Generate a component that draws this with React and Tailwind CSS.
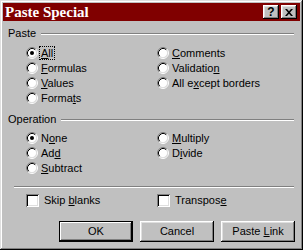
import React from 'react';

const Radio = ({ checked }) => (
  <svg width="12" height="12" viewBox="0 0 12 12" className="shrink-0">
    <circle cx="6" cy="6" r="4.5" fill="#fff" />
    <path d="M2.11 9.89 A5.5 5.5 0 0 1 9.89 2.11" fill="none" stroke="#808080" strokeWidth="1" />
    <path d="M2.82 9.18 A4.5 4.5 0 0 1 9.18 2.82" fill="none" stroke="#000" strokeWidth="1" />
    <path d="M9.89 2.11 A5.5 5.5 0 0 1 2.11 9.89" fill="none" stroke="#fff" strokeWidth="1" />
    <path d="M9.18 2.82 A4.5 4.5 0 0 1 2.82 9.18" fill="none" stroke="#dfdfdf" strokeWidth="1" />
    {checked && <circle cx="6" cy="6" r="2" fill="#000" />}
  </svg>
);

const Label = ({ text, accel, focus }) => {
  const i = accel;
  return (
    <span
      className={
        'px-[1px] leading-[12px] border ' +
        (focus ? 'border-dotted border-black' : 'border-transparent')
      }
    >
      {text.slice(0, i)}
      <u className="underline-offset-[1px]">{text[i]}</u>
      {text.slice(i + 1)}
    </span>
  );
};

const RadioRow = ({ text, accel, checked, focus }) => (
  <div className="h-[15px] flex items-center gap-[1px]">
    <Radio checked={checked} />
    <Label text={text} accel={accel} focus={focus} />
  </div>
);

const Check = ({ text, accel }) => (
  <div className="flex items-center gap-[3px]">
    <div className="w-[13px] h-[13px] bg-white shadow-[inset_1px_1px_0_#808080,inset_-1px_-1px_0_#fff,inset_2px_2px_0_#000,inset_-2px_-2px_0_#dfdfdf]" />
    <Label text={text} accel={accel} />
  </div>
);

const GroupTitle = ({ children }) => (
  <div className="h-[13px] flex items-center ml-[5px] mr-[6px]">
    <span className="leading-[13px]">{children}</span>
    <div className="flex-1 ml-[5px] h-[2px] border-t border-t-[#808080] border-b border-b-white" />
  </div>
);

const Button = ({ children, isDefault }) => (
  <div
    className={
      'w-[74px] h-[21px] flex items-center justify-center ' +
      (isDefault
        ? 'border border-black shadow-[inset_-1px_-1px_0_#000,inset_1px_1px_0_#fff,inset_-2px_-2px_0_#808080]'
        : 'shadow-[inset_-1px_-1px_0_#000,inset_1px_1px_0_#fff,inset_-2px_-2px_0_#808080,inset_2px_2px_0_#dfdfdf]')
    }
  >
    {children}
  </div>
);

const TitleBtn = ({ children }) => (
  <div className="w-[16px] h-[14px] bg-[#c0c0c0] flex items-center justify-center text-black font-bold text-[12px] leading-none shadow-[inset_-1px_-1px_0_#000,inset_1px_1px_0_#fff,inset_-2px_-2px_0_#808080,inset_2px_2px_0_#dfdfdf]">
    {children}
  </div>
);

export default function App() {
  return (
    <div className="w-[303px] h-[250px] bg-[#c0c0c0] p-[3px] flex flex-col text-black text-[11px] font-['Liberation_Sans',Arial,sans-serif] shadow-[inset_-1px_-1px_0_#000,inset_1px_1px_0_#dfdfdf,inset_-2px_-2px_0_#808080,inset_2px_2px_0_#fff] overflow-hidden">
      <div className="h-[18px] bg-[#800000] flex items-center justify-between pl-[2px] pr-[3px] shrink-0">
        <span className="text-white font-bold text-[15px] leading-none font-['Liberation_Serif','Times_New_Roman',serif]">
          Paste Special
        </span>
        <div className="flex gap-[2px]">
          <TitleBtn>
            <span className="font-['Liberation_Sans',Arial,sans-serif]">?</span>
          </TitleBtn>
          <TitleBtn>
            <svg width="8" height="7" viewBox="0 0 8 7">
              <path d="M0 0h2l2 2.2L6 0h2L5 3.5 8 7H6L4 4.8 2 7H0l3-3.5z" fill="#000" />
            </svg>
          </TitleBtn>
        </div>
      </div>

      <div className="mt-[6px]">
        <GroupTitle>Paste</GroupTitle>
      </div>
      <div className="mt-[5px] ml-[23px] flex">
        <div className="w-[131px] flex flex-col">
          <RadioRow text="All" accel={0} checked focus />
          <RadioRow text="Formulas" accel={0} />
          <RadioRow text="Values" accel={0} />
          <RadioRow text="Formats" accel={5} />
        </div>
        <div className="flex flex-col">
          <RadioRow text="Comments" accel={0} />
          <RadioRow text="Validation" accel={9} />
          <RadioRow text="All except borders" accel={5} />
        </div>
      </div>

      <div className="mt-[8px]">
        <GroupTitle>Operation</GroupTitle>
      </div>
      <div className="mt-[4px] ml-[23px] flex">
        <div className="w-[131px] flex flex-col">
          <RadioRow text="None" accel={1} checked />
          <RadioRow text="Add" accel={2} />
          <RadioRow text="Subtract" accel={0} />
        </div>
        <div className="flex flex-col">
          <RadioRow text="Multiply" accel={0} />
          <RadioRow text="Divide" accel={1} />
        </div>
      </div>

      <div className="mt-[11px] ml-[11px] mr-[6px] h-[2px] border-t border-t-[#808080] border-b border-b-white" />

      <div className="mt-[5px] ml-[23px] flex">
        <div className="w-[131px]">
          <Check text="Skip blanks" accel={5} />
        </div>
        <Check text="Transpose" accel={8} />
      </div>

      <div className="mt-[14px] flex justify-end gap-[7px] mr-[5px]">
        <Button isDefault>OK</Button>
        <Button>Cancel</Button>
        <Button>
          <span>
            Paste <u>L</u>ink
          </span>
        </Button>
      </div>
    </div>
  );
}
